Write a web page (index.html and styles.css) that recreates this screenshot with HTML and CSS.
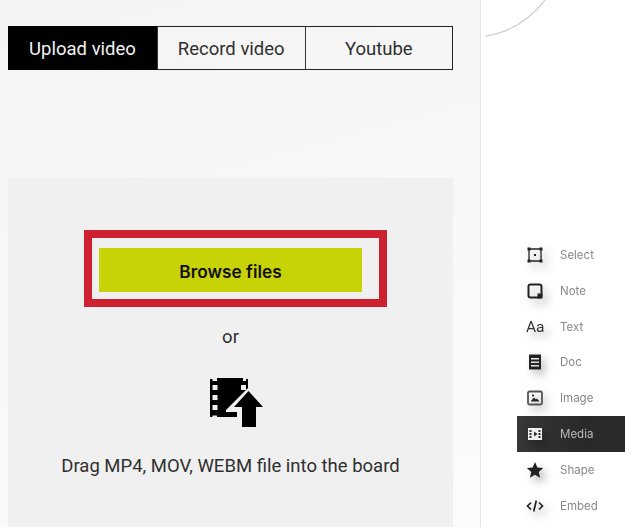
FILE: index.html
```html
<!DOCTYPE html>
<html lang="en">
<head>
<meta charset="utf-8">
<title>Upload video</title>
<link rel="stylesheet" href="styles.css">
</head>
<body>
<main class="panel">
  <nav class="tabs">
    <div class="tab tab-active">Upload video</div>
    <div class="tab">Record video</div>
    <div class="tab">Youtube</div>
  </nav>
  <section class="drop">
    <div class="highlight">
      <button class="browse">Browse files</button>
    </div>
    <p class="or">or</p>
    <svg class="upload-icon" width="53" height="49" viewBox="0 0 53 49">
      <path fill="#000" fill-rule="evenodd" d="M0 1h2.500v2H7V0h26v1h0v2h3V1h2v9L16 32v2h11v5H7v-1.500H2.500V39H0zM2.500 7v5h5V7zm0 10v5h5v-5zm0 10v5h5v-5zM31 7v5h5V7z"/>
      <path fill="#000" d="M38.500 13 53 29h-7v20H32V29h-8z"/>
    </svg>
    <p class="hint">Drag MP4, MOV, WEBM file into the board</p>
  </section>
</main>
<aside class="side">
  <svg class="curve" width="70" height="40" viewBox="0 0 70 40"><path d="M5 36C30 32 50 18 64 0" fill="none" stroke="#cfcfcf" stroke-width="1.300"/></svg>
  <ul class="tools">
    <li class="tool">
      <svg class="ico" width="18" height="18" viewBox="0 0 18 18"><path fill="none" stroke="#222" stroke-width="1.300" d="M3 3h12v12H3z"/><path fill="#222" d="M1.500 1.500h3v3h-3zM13.500 1.500h3v3h-3zM1.500 13.500h3v3h-3zM13.500 13.500h3v3h-3zM8 8h2v2H8z"/></svg>
      <span>Select</span>
    </li>
    <li class="tool">
      <svg class="ico" width="18" height="18" viewBox="0 0 18 18"><rect x="2.500" y="2.500" width="13" height="13" rx="2" fill="none" stroke="#222" stroke-width="2"/><path fill="#222" d="M11.500 11.500h5v5h-5z"/></svg>
      <span>Note</span>
    </li>
    <li class="tool">
      <span class="ico aa">Aa</span>
      <span>Text</span>
    </li>
    <li class="tool">
      <svg class="ico" width="18" height="18" viewBox="0 0 18 18"><path fill="#222" fill-rule="evenodd" d="M3 1.500h12v15H3zM5 5v1.500h8V5zm0 3.500V10h8V8.500zM5 12v1.500h8V12z"/></svg>
      <span>Doc</span>
    </li>
    <li class="tool">
      <svg class="ico" width="18" height="18" viewBox="0 0 18 18"><rect x="2" y="2.500" width="14" height="13" rx="1.500" fill="none" stroke="#555" stroke-width="1.800"/><path fill="#222" d="M4.500 12.500 8 8.500l2 2 1-1 2.500 3z"/><circle cx="7" cy="6.500" r="1.100" fill="#222"/></svg>
      <span>Image</span>
    </li>
    <li class="tool tool-active">
      <svg class="ico" width="18" height="18" viewBox="0 0 18 18"><path fill="#eee" fill-rule="evenodd" d="M2 3h14v12H2zM3.500 5v2h2V5zm0 3v2h2V8zm0 3v2h2v-2zm9-6v2h2V5zm0 3v2h2V8zm0 3v2h2v-2zM8 6.500v5L11.500 9z"/></svg>
      <span>Media</span>
    </li>
    <li class="tool">
      <svg class="ico" width="18" height="18" viewBox="0 0 18 18"><path fill="#222" d="M9 1l2.400 5.400 5.800.6-4.400 3.900 1.300 5.800L9 13.700l-5.100 3 1.300-5.800L.8 7l5.800-.6z"/></svg>
      <span>Shape</span>
    </li>
    <li class="tool">
      <svg class="ico" width="18" height="18" viewBox="0 0 18 18"><path fill="none" stroke="#222" stroke-width="1.700" d="M5 5.500 1.500 9 5 12.500M13 5.500 16.500 9 13 12.500M10.300 3.500l-2.600 11"/></svg>
      <span>Embed</span>
    </li>
  </ul>
</aside>
</body>
</html>
```
FILE: styles.css
```css
* { box-sizing: border-box; }
html, body { height: 100%; }
body {
  margin: 0;
  display: flex;
  height: 527px;
  overflow: hidden;
  background: #fff;
  font-family: Roboto, "Liberation Sans", sans-serif;
  color: #222;
}
.panel {
  width: 481px;
  flex: none;
  padding: 26px 27px 0 8px;
  display: flex;
  flex-direction: column;
  background: linear-gradient(165deg, #f4f4f4 0%, #fbfbfb 100%);
  border-right: 1px solid #e4e4e4;
}
.tabs {
  display: flex;
  height: 44px;
  border: 1px solid #222;
}
.tab {
  flex: 1;
  display: flex;
  align-items: center;
  justify-content: center;
  padding-top: 1px;
  font-size: 18.500px;
  color: #2f2f2f;
  border-left: 1px solid #333;
}
.tab-active {
  flex: none;
  width: 149px;
  margin: -1px 0 -1px -1px;
  background: #000;
  color: #f2f2f2;
  border-left: 0;
}
.drop {
  flex: 1;
  margin-top: 108px;
  background: #f0f0f0;
  display: flex;
  flex-direction: column;
  align-items: center;
  padding-top: 52px;
}
.highlight {
  width: 303px;
  height: 77px;
  margin-left: 10px;
  border: 8px solid #cd2031;
  display: flex;
  align-items: flex-start;
  padding: 10px 0 0 7px;
}
.browse {
  width: 263px;
  height: 44px;
  margin: 0;
  padding: 2px 0 0;
  border: 0;
  background: #c8d307;
  color: #111;
  font: 600 17.300px Inter, Roboto, sans-serif;
}
.or {
  margin: 20px 0 0;
  font-size: 18.500px;
  line-height: 20px;
  color: #2f2f2f;
}
.upload-icon {
  margin: 31px 0 0 12px;
  display: block;
}
.hint {
  margin: 28px 0 0;
  font-size: 18.500px;
  line-height: 22px;
  color: #2f2f2f;
}
.side {
  flex: 1;
  position: relative;
  display: flex;
  flex-direction: column;
  justify-content: flex-end;
}
.curve { position: absolute; left: 0; top: 0; }
.tools {
  list-style: none;
  margin: 0 7px 3.500px 36px;
  padding: 0;
  filter: blur(.4px);
}
.tool {
  height: 35.800px;
  display: flex;
  align-items: center;
  padding-left: 9px;
  gap: 16px;
  font: 11.500px Inter, Roboto, sans-serif;
  color: #888;
}
.tool .ico {
  width: 18px;
  flex: none;
  filter: drop-shadow(4px 5px 4px rgba(0,0,0,.3));
}
.aa {
  font: 15.500px/18px Roboto, sans-serif;
  color: #333;
  white-space: nowrap;
}
.tool-active {
  background: linear-gradient(100deg, #383636 0%, #2a2828 60%, #2c2a2a 100%);
  color: #bbb;
}
```
